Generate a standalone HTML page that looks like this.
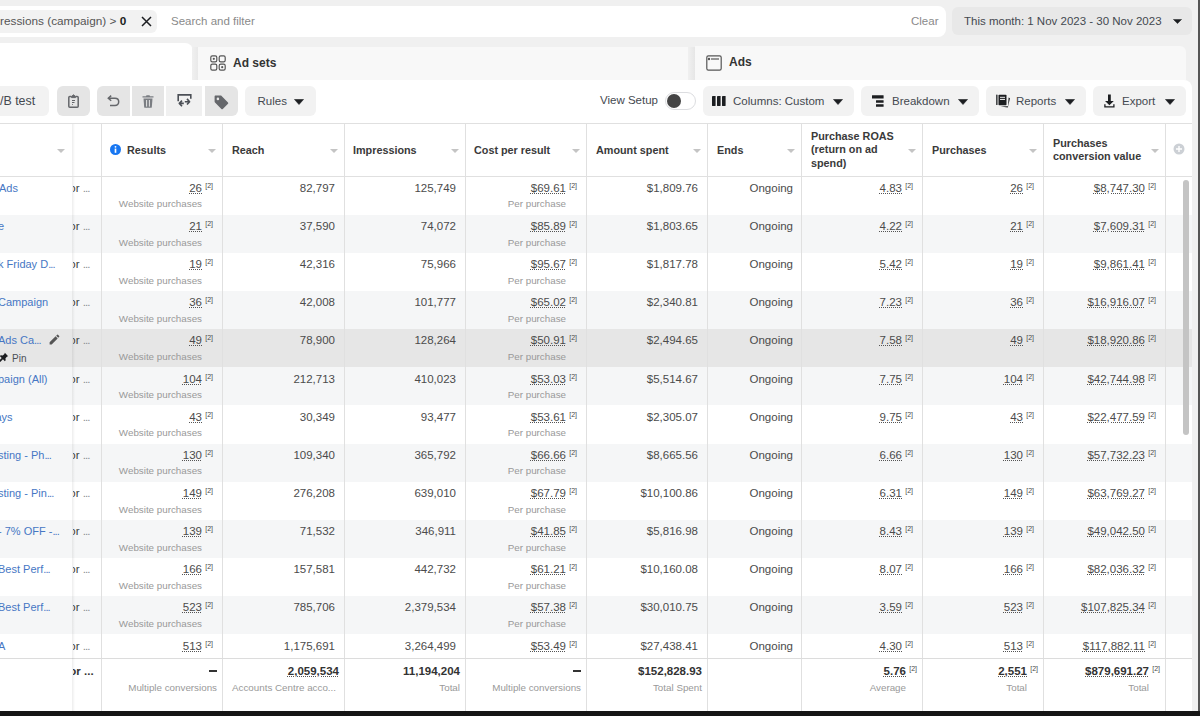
<!DOCTYPE html><html><head><meta charset="utf-8"><style>
*{margin:0;padding:0;box-sizing:border-box}
html,body{width:1200px;height:716px;overflow:hidden}
body{background:#f0f0f0;font-family:"Liberation Sans",sans-serif;position:relative;color:#1c1e21}
.abs{position:absolute}
#search{position:absolute;left:0;top:6px;width:946px;height:31px;background:#fff;border-radius:0 8px 8px 0}
#chip{position:absolute;left:0;top:10px;width:157px;height:23px;background:#f2f2f2;border-radius:0 6px 6px 0;font-size:11.8px;color:#555;white-space:nowrap}
#chip .t{position:absolute;left:0;top:4px;line-height:14px}
#chip .x{position:absolute;left:141px;top:6px}
#ph{position:absolute;left:171px;top:14px;font-size:11.5px;color:#8a8a8a;line-height:14px}
#clear{position:absolute;left:911px;top:14px;font-size:11.5px;color:#8a8a8a;line-height:14px}
#date{position:absolute;left:952px;top:7px;width:240px;height:28px;background:#e8e8e8;border-radius:6px;font-size:11.5px;color:#444950}
#date .t{position:absolute;left:12px;top:7px;line-height:14px;white-space:nowrap}
.caret{position:absolute;width:0;height:0;border-left:5px solid transparent;border-right:5px solid transparent;border-top:6px solid #1c1e21}
#tab1{position:absolute;left:0;top:43px;width:193px;height:40px;background:#fff;border-radius:0 8px 0 0}
#tab2{position:absolute;left:198px;top:46.5px;width:490px;height:33.5px;background:#f8f8f8;border-radius:0}
#tab3{position:absolute;left:695px;top:46px;width:491px;height:34px;background:#f8f8f8;border-radius:0 6px 0 0}
.tabt{position:absolute;font-size:12px;font-weight:bold;color:#333;line-height:16px}
#toolbar{position:absolute;left:0;top:80px;width:1192px;height:44px;background:#fff;border-radius:0 8px 0 0}
.btn{position:absolute;top:86px;height:30px;background:#f2f2f2;border-radius:6px;font-size:11.5px;color:#444950}
.btn .t{position:absolute;top:8px;line-height:14px;white-space:nowrap}
.btn svg{position:absolute}
#tbl{position:absolute;left:0;top:123px;width:1192px;height:588px;background:#fff;overflow:hidden}
#tbl > div,#tbl > svg{position:absolute}
.row{left:0;width:1192px;height:38.15px;background:#fff}
.row.alt{background:#f5f6f7}
.row.hov{background:#e6e6e6}
.vl{top:0;width:1px;height:588px;background:#e0e0e0}
.c{font-size:11.5px;line-height:14px;white-space:nowrap;color:#4b4b4b}
.name{left:0;color:#4677c4}
.obj{left:72.5px;color:#3b3d40;width:28px;overflow:hidden;text-indent:-3.2px}
.num{text-align:right}
.num u{text-decoration:underline dotted #555;text-underline-offset:0.5px;text-decoration-thickness:1px}
.c i{font-style:normal;font-weight:normal;font-size:7px;position:absolute;right:0;top:0;line-height:9px;color:#4b4b4b}
.c.s{padding-right:11px}
.sub{font-size:9.8px;line-height:12px;color:#999}
.fb{font-weight:bold;color:#333}
.pin{color:#4b4f56;font-size:10px}
.hd{font-size:10.8px;font-weight:bold;color:#3a3a3a;line-height:13.3px}
.sa{width:0;height:0;border-left:4px solid transparent;border-right:4px solid transparent;border-top:4px solid #c4c4c4}
.foot{left:0;width:1192px;height:60px;background:#fff;border-top:1px solid #dcdcdc}
.sticky{left:72px;top:0;width:3px;height:588px;background:linear-gradient(to right,rgba(0,0,0,0.07),rgba(0,0,0,0))}
.name{font-size:11px}
.el{letter-spacing:-0.9px}
.obj .el{color:#8a8d91}
.dash{display:inline-block;width:8px;height:1.6px;background:#333;vertical-align:3.5px}

</style></head><body>
<div id="search"></div>
<div id="chip"><span class="t">ressions (campaign) &gt; <b style="color:#1c1e21">0</b></span>
<svg class="x" width="11" height="11" viewBox="0 0 11 11"><path d="M1 1L10 10M10 1L1 10" stroke="#1c1e21" stroke-width="1.5"/></svg></div>
<div id="ph">Search and filter</div>
<div id="clear">Clear</div>
<div id="date"><span class="t">This month: 1 Nov 2023 - 30 Nov 2023</span><svg class="abs" style="left:221px;top:12px" width="9" height="5" viewBox="0 0 10 6" preserveAspectRatio="none"><path d="M0.5 0.5H9.5L5 5.5Z" fill="#1c1e21" stroke="#1c1e21" stroke-width="0.6" stroke-linejoin="round"/></svg></div>
<div id="tab2"><svg class="abs" style="left:12px;top:8px" width="16" height="16" viewBox="0 0 16 16" fill="none" stroke="#555" stroke-width="1.2"><rect x="0.8" y="0.8" width="6" height="6" rx="1.6"/><rect x="9.2" y="0.8" width="6" height="6" rx="1.6"/><rect x="0.8" y="9.2" width="6" height="6" rx="1.6"/><rect x="9.2" y="9.2" width="6" height="6" rx="1.6"/><circle cx="3.8" cy="3.8" r="1.1" fill="#555" stroke="none"/><circle cx="12.2" cy="12.2" r="1.1" fill="#555" stroke="none"/></svg><span class="tabt" style="left:35px;top:8px">Ad sets</span></div>
<div id="tab3"><svg class="abs" style="left:11px;top:9px" width="16" height="16" viewBox="0 0 16 16" fill="none" stroke="#555" stroke-width="1.2"><rect x="0.8" y="0.8" width="14.4" height="14.4" rx="1.6"/><path d="M5 4H13" /><circle cx="3" cy="4" r="0.6" fill="#555"/></svg><span class="tabt" style="left:34px;top:8px">Ads</span></div>
<div id="tab1"></div>
<div class="abs" style="left:192px;top:46.5px;width:6px;height:33.5px;background:linear-gradient(to right,#f0f0f0,#e9e9e9)"></div>
<div class="abs" style="left:688px;top:46.5px;width:7px;height:33.5px;background:linear-gradient(to right,#f0f0f0,#e6e6e6)"></div>
<div id="toolbar"></div>
<div class="btn" style="left:0;width:49px;border-radius:0 6px 6px 0"><span class="t" style="left:0;font-size:12.4px;top:7.5px">/B test</span></div>
<div class="btn" style="left:56.5px;width:33px;background:#e5e5e5"><svg style="left:11px;top:8px" width="11" height="14" viewBox="0 0 11 14" fill="none" stroke="#65676b" stroke-width="1.5"><path d="M3.5 2.5H1.8C1.2 2.5 0.8 2.9 0.8 3.5V12.2C0.8 12.8 1.2 13.2 1.8 13.2H9.2C9.8 13.2 10.2 12.8 10.2 12.2V3.5C10.2 2.9 9.8 2.5 9.2 2.5H7.5"/><path d="M3.5 3.6H7.5L7.5 2.5L5.5 0.8L3.5 2.5Z" fill="#65676b" stroke-width="1"/><path d="M4 6.5H7M4 8.5H6.5M4 10.5H4.8" stroke-width="1"/></svg></div>
<div class="btn" style="left:96.5px;width:33px;background:#e5e5e5;border-radius:6px 0 0 6px"><svg style="left:10px;top:9px" width="13" height="12" viewBox="0 0 13 12" fill="none" stroke="#65676b" stroke-width="1.5"><path d="M1.5 3.2H8C10.2 3.2 11.7 4.8 11.7 6.8C11.7 8.8 10.2 10.6 8 10.6H3"/><path d="M4.2 0.6L1.3 3.2L4.2 5.8"/></svg></div>
<div class="btn" style="left:131.5px;width:32.5px;background:#e5e5e5;border-radius:0"><svg style="left:10px;top:8px" width="12" height="14" viewBox="0 0 12 14"><path d="M4.5 1.2H7.5L8 2.2H11.5V3.6H0.5V2.2H4Z" fill="#7a7d82"/><path d="M1.5 4.6H10.5L9.8 13.2C9.7 13.6 9.4 13.8 9 13.8H3C2.6 13.8 2.3 13.6 2.2 13.2Z" fill="#7a7d82"/><path d="M4.6 6V12.6M7.4 6V12.6" stroke="#e5e5e5" stroke-width="1"/></svg></div>
<div class="btn" style="left:166px;width:36px;background:#f0f0f0;border-radius:0"><svg style="left:11px;top:8px" width="15" height="15" viewBox="0 0 15 15" fill="none" stroke="#4b4f56" stroke-width="1.6"><path d="M1.2 7.2V0.9H13.8V4.7"/><path d="M5 6.6L2.3 9.4L5 12.2M2.5 9.4H6.8M10 4.9L12.6 7.7L10 10.5M7.8 7.7H12.4" stroke-linejoin="round"/></svg></div>
<div class="btn" style="left:204.5px;width:33px;background:#e5e5e5;border-radius:0 6px 6px 0"><svg style="left:9px;top:8.5px" width="15" height="15" viewBox="0 0 15 15"><path d="M0.6 1.6C0.6 1 1 0.6 1.6 0.6H6.6C7 0.6 7.3 0.7 7.6 1L14 7.4C14.4 7.8 14.4 8.4 14 8.8L8.8 14C8.4 14.4 7.8 14.4 7.4 14L1 7.6C0.7 7.3 0.6 7 0.6 6.6Z" fill="#65676b"/><circle cx="3.9" cy="3.9" r="1.3" fill="#e5e5e5"/></svg></div>
<div class="btn" style="left:244.5px;width:71px"><span class="t" style="left:13px">Rules</span><svg style="left:49px;top:12.5px" width="10" height="6" viewBox="0 0 10 6"><path d="M0.5 0.5H9.5L5 5.5Z" fill="#1c1e21" stroke="#1c1e21" stroke-width="0.6" stroke-linejoin="round"/></svg></div>
<div class="abs" style="left:600px;top:93px;font-size:11.5px;color:#444950;line-height:14px">View Setup</div>
<div class="abs" style="left:664.5px;top:92px;width:31px;height:18px;border-radius:9px;border:1px solid #dcdde0;background:#fff"></div>
<div class="abs" style="left:667px;top:94px;width:14px;height:14px;border-radius:7px;background:#444"></div>
<div class="btn" style="left:703px;width:151px"><svg style="left:9.3px;top:10px" width="14" height="10" viewBox="0 0 14 10" fill="#1c1e21"><rect x="0" y="0" width="3.6" height="10" rx="0.4"/><rect x="5" y="0" width="3.6" height="10" rx="0.4"/><rect x="10" y="0" width="3.6" height="10" rx="0.4"/></svg><span class="t" style="left:30px">Columns: Custom</span><svg style="left:130px;top:12.5px" width="10" height="6" viewBox="0 0 10 6"><path d="M0.5 0.5H9.5L5 5.5Z" fill="#1c1e21" stroke="#1c1e21" stroke-width="0.6" stroke-linejoin="round"/></svg></div>
<div class="btn" style="left:861px;width:118px"><svg style="left:11px;top:9px" width="12" height="12" viewBox="0 0 12 12" fill="#1c1e21"><rect x="0" y="0.3" width="11.6" height="3.2" rx="0.3"/><rect x="4" y="5.2" width="7.6" height="2.5" rx="0.3"/><rect x="4" y="9.2" width="7.6" height="2.5" rx="0.3"/></svg><span class="t" style="left:31px">Breakdown</span><svg style="left:97px;top:12.5px" width="10" height="6" viewBox="0 0 10 6"><path d="M0.5 0.5H9.5L5 5.5Z" fill="#1c1e21" stroke="#1c1e21" stroke-width="0.6" stroke-linejoin="round"/></svg></div>
<div class="btn" style="left:986px;width:100px"><svg style="left:9.5px;top:8px" width="15" height="14" viewBox="0 0 15 14"><path d="M12.6 3.6L14 4.2L11.8 13.6L4.5 12.4L12 12.2Z" fill="#1c1e21"/><rect x="0.2" y="0.5" width="1.3" height="10.5" rx="0.6" fill="#1c1e21"/><rect x="2.5" y="0.7" width="8" height="10.5" rx="0.8" fill="#1c1e21"/><rect x="4" y="2.8" width="5" height="1" fill="#f2f2f2"/><rect x="4" y="4.9" width="5" height="1" fill="#f2f2f2"/></svg><span class="t" style="left:30px">Reports</span><svg style="left:79px;top:12.5px" width="10" height="6" viewBox="0 0 10 6"><path d="M0.5 0.5H9.5L5 5.5Z" fill="#1c1e21" stroke="#1c1e21" stroke-width="0.6" stroke-linejoin="round"/></svg></div>
<div class="btn" style="left:1093px;width:92.5px"><svg style="left:11px;top:8px" width="11" height="14" viewBox="0 0 11 14"><path d="M4 0.6H6.8V7H9.8L5.4 11.2L1 7H4Z" fill="#1c1e21"/><path d="M0.9 10.2V12.8H9.9V10.2" fill="none" stroke="#1c1e21" stroke-width="1.3"/></svg><span class="t" style="left:29px">Export</span><svg style="left:72px;top:12.5px" width="10" height="6" viewBox="0 0 10 6"><path d="M0.5 0.5H9.5L5 5.5Z" fill="#1c1e21" stroke="#1c1e21" stroke-width="0.6" stroke-linejoin="round"/></svg></div>

<div id="tbl">
<div class="row" style="top:53.5px"></div>
<div class="row alt" style="top:91.7px"></div>
<div class="row" style="top:129.8px"></div>
<div class="row alt" style="top:167.9px"></div>
<div class="row hov" style="top:206.1px"></div>
<div class="row alt" style="top:244.2px"></div>
<div class="row" style="top:282.4px"></div>
<div class="row alt" style="top:320.6px"></div>
<div class="row" style="top:358.7px"></div>
<div class="row alt" style="top:396.8px"></div>
<div class="row" style="top:435.0px"></div>
<div class="row alt" style="top:473.1px"></div>
<div class="row" style="top:511.3px"></div>
<div class="vl" style="left:101px"></div>
<div class="vl" style="left:222px"></div>
<div class="vl" style="left:344px"></div>
<div class="vl" style="left:465px"></div>
<div class="vl" style="left:586px"></div>
<div class="vl" style="left:707px"></div>
<div class="vl" style="left:801px"></div>
<div class="vl" style="left:922px"></div>
<div class="vl" style="left:1043px"></div>
<div class="vl" style="left:1165px"></div>
<div class="sticky"></div>
<div style="left:0;top:0;width:1192px;height:1px;background:#e0e0e0"></div>
<div style="left:0;top:52.5px;width:1192px;height:1px;background:#e0e0e0"></div>
<div class="sa" style="left:57px;top:26px"></div>
<svg style="left:110px;top:21px" width="11" height="11" viewBox="0 0 12 12"><circle cx="6" cy="6" r="6" fill="#1877f2"/><rect x="5.1" y="5" width="1.8" height="4.6" fill="#fff"/><circle cx="6" cy="3.1" r="1" fill="#fff"/></svg>
<div class="hd" style="left:127px;top:20.5px">Results</div><div class="sa" style="left:208px;top:26px"></div>
<div class="hd" style="left:232px;top:20.5px">Reach</div><div class="sa" style="left:330px;top:26px"></div>
<div class="hd" style="left:353px;top:20.5px">Impressions</div><div class="sa" style="left:451px;top:26px"></div>
<div class="hd" style="left:474px;top:20.5px">Cost per result</div><div class="sa" style="left:572px;top:26px"></div>
<div class="hd" style="left:596px;top:20.5px">Amount spent</div><div class="sa" style="left:693px;top:26px"></div>
<div class="hd" style="left:717px;top:20.5px">Ends</div><div class="sa" style="left:787px;top:26px"></div>
<div class="hd" style="left:811px;top:7.1px">Purchase ROAS<br>(return on ad<br>spend)</div><div class="sa" style="left:908px;top:26px"></div>
<div class="hd" style="left:932px;top:20.5px">Purchases</div><div class="sa" style="left:1029px;top:26px"></div>
<div class="hd" style="left:1053px;top:13.8px">Purchases<br>conversion value</div><div class="sa" style="left:1151px;top:26px"></div>
<svg style="left:1173px;top:20px" width="12" height="12" viewBox="0 0 12 12"><circle cx="6" cy="6" r="5.5" fill="#ccd0d5"/><path d="M6 3V9M3 6H9" stroke="#fff" stroke-width="1.4"/></svg>
<div style="left:1183px;top:57px;width:6px;height:255px;border-radius:3px;background:#c4c4c4"></div>

<div class="c name" style="top:57.8px;left:-1px">Ads</div>
<div class="c obj" style="top:57.8px">or <span class="el">...</span></div>
<div class="c num s" style="top:57.8px;right:979px"><u>26</u><i>[2]</i></div>
<div class="c sub" style="top:75.4px;right:990px">Website purchases</div>
<div class="c num" style="top:57.8px;right:857px">82,797</div>
<div class="c num" style="top:57.8px;right:736px">125,749</div>
<div class="c num s" style="top:57.8px;right:615px"><u>$69.61</u><i>[2]</i></div>
<div class="c sub" style="top:75.4px;right:626px">Per purchase</div>
<div class="c num" style="top:57.8px;right:494px">$1,809.76</div>
<div class="c num" style="top:57.8px;right:399px">Ongoing</div>
<div class="c num s" style="top:57.8px;right:279px"><u>4.83</u><i>[2]</i></div>
<div class="c num s" style="top:57.8px;right:158px"><u>26</u><i>[2]</i></div>
<div class="c num s" style="top:57.8px;right:36px"><u>$8,747.30</u><i>[2]</i></div>
<div class="c name" style="top:96.0px;left:-2px">e</div>
<div class="c obj" style="top:96.0px">or <span class="el">...</span></div>
<div class="c num s" style="top:96.0px;right:979px"><u>21</u><i>[2]</i></div>
<div class="c sub" style="top:113.6px;right:990px">Website purchases</div>
<div class="c num" style="top:96.0px;right:857px">37,590</div>
<div class="c num" style="top:96.0px;right:736px">74,072</div>
<div class="c num s" style="top:96.0px;right:615px"><u>$85.89</u><i>[2]</i></div>
<div class="c sub" style="top:113.6px;right:626px">Per purchase</div>
<div class="c num" style="top:96.0px;right:494px">$1,803.65</div>
<div class="c num" style="top:96.0px;right:399px">Ongoing</div>
<div class="c num s" style="top:96.0px;right:279px"><u>4.22</u><i>[2]</i></div>
<div class="c num s" style="top:96.0px;right:158px"><u>21</u><i>[2]</i></div>
<div class="c num s" style="top:96.0px;right:36px"><u>$7,609.31</u><i>[2]</i></div>
<div class="c name" style="top:134.1px;left:-2px">k Friday D<span class="el">...</span></div>
<div class="c obj" style="top:134.1px">or <span class="el">...</span></div>
<div class="c num s" style="top:134.1px;right:979px"><u>19</u><i>[2]</i></div>
<div class="c sub" style="top:151.7px;right:990px">Website purchases</div>
<div class="c num" style="top:134.1px;right:857px">42,316</div>
<div class="c num" style="top:134.1px;right:736px">75,966</div>
<div class="c num s" style="top:134.1px;right:615px"><u>$95.67</u><i>[2]</i></div>
<div class="c sub" style="top:151.7px;right:626px">Per purchase</div>
<div class="c num" style="top:134.1px;right:494px">$1,817.78</div>
<div class="c num" style="top:134.1px;right:399px">Ongoing</div>
<div class="c num s" style="top:134.1px;right:279px"><u>5.42</u><i>[2]</i></div>
<div class="c num s" style="top:134.1px;right:158px"><u>19</u><i>[2]</i></div>
<div class="c num s" style="top:134.1px;right:36px"><u>$9,861.41</u><i>[2]</i></div>
<div class="c name" style="top:172.2px;left:-2px">Campaign</div>
<div class="c obj" style="top:172.2px">or <span class="el">...</span></div>
<div class="c num s" style="top:172.2px;right:979px"><u>36</u><i>[2]</i></div>
<div class="c sub" style="top:189.8px;right:990px">Website purchases</div>
<div class="c num" style="top:172.2px;right:857px">42,008</div>
<div class="c num" style="top:172.2px;right:736px">101,777</div>
<div class="c num s" style="top:172.2px;right:615px"><u>$65.02</u><i>[2]</i></div>
<div class="c sub" style="top:189.8px;right:626px">Per purchase</div>
<div class="c num" style="top:172.2px;right:494px">$2,340.81</div>
<div class="c num" style="top:172.2px;right:399px">Ongoing</div>
<div class="c num s" style="top:172.2px;right:279px"><u>7.23</u><i>[2]</i></div>
<div class="c num s" style="top:172.2px;right:158px"><u>36</u><i>[2]</i></div>
<div class="c num s" style="top:172.2px;right:36px"><u>$16,916.07</u><i>[2]</i></div>
<div class="c name" style="top:210.4px;left:-2px">Ads Ca<span class="el">...</span></div>
<svg style="left:47.5px;top:209.6px" width="13" height="13" viewBox="0 0 24 24"><path d="M3 17.25V21h3.75L17.81 9.94l-3.75-3.75L3 17.25zM20.71 7.04a1 1 0 0 0 0-1.41l-2.34-2.34a1 1 0 0 0-1.41 0l-1.83 1.83 3.75 3.75 1.83-1.83z" fill="#555"/></svg>
<svg style="left:-1px;top:228.6px" width="10" height="10" viewBox="0 0 24 24"><path d="M14 2l8 8-2.5 1-4 4 .5 5-2 2-4.5-4.5L3 24 0 21l6.5-6.5L2 10l2-2 5 .5 4-4z" fill="#1c1e21"/></svg>
<div class="c pin" style="left:12px;top:228.6px">Pin</div>

<div class="c obj" style="top:210.4px">or <span class="el">...</span></div>
<div class="c num s" style="top:210.4px;right:979px"><u>49</u><i>[2]</i></div>
<div class="c sub" style="top:228.0px;right:990px">Website purchases</div>
<div class="c num" style="top:210.4px;right:857px">78,900</div>
<div class="c num" style="top:210.4px;right:736px">128,264</div>
<div class="c num s" style="top:210.4px;right:615px"><u>$50.91</u><i>[2]</i></div>
<div class="c sub" style="top:228.0px;right:626px">Per purchase</div>
<div class="c num" style="top:210.4px;right:494px">$2,494.65</div>
<div class="c num" style="top:210.4px;right:399px">Ongoing</div>
<div class="c num s" style="top:210.4px;right:279px"><u>7.58</u><i>[2]</i></div>
<div class="c num s" style="top:210.4px;right:158px"><u>49</u><i>[2]</i></div>
<div class="c num s" style="top:210.4px;right:36px"><u>$18,920.86</u><i>[2]</i></div>
<div class="c name" style="top:248.6px;left:-2px">paign (All)</div>
<div class="c obj" style="top:248.6px">or <span class="el">...</span></div>
<div class="c num s" style="top:248.6px;right:979px"><u>104</u><i>[2]</i></div>
<div class="c sub" style="top:266.1px;right:990px">Website purchases</div>
<div class="c num" style="top:248.6px;right:857px">212,713</div>
<div class="c num" style="top:248.6px;right:736px">410,023</div>
<div class="c num s" style="top:248.6px;right:615px"><u>$53.03</u><i>[2]</i></div>
<div class="c sub" style="top:266.1px;right:626px">Per purchase</div>
<div class="c num" style="top:248.6px;right:494px">$5,514.67</div>
<div class="c num" style="top:248.6px;right:399px">Ongoing</div>
<div class="c num s" style="top:248.6px;right:279px"><u>7.75</u><i>[2]</i></div>
<div class="c num s" style="top:248.6px;right:158px"><u>104</u><i>[2]</i></div>
<div class="c num s" style="top:248.6px;right:36px"><u>$42,744.98</u><i>[2]</i></div>
<div class="c name" style="top:286.7px;left:-4.5px">ays</div>
<div class="c obj" style="top:286.7px">or <span class="el">...</span></div>
<div class="c num s" style="top:286.7px;right:979px"><u>43</u><i>[2]</i></div>
<div class="c sub" style="top:304.3px;right:990px">Website purchases</div>
<div class="c num" style="top:286.7px;right:857px">30,349</div>
<div class="c num" style="top:286.7px;right:736px">93,477</div>
<div class="c num s" style="top:286.7px;right:615px"><u>$53.61</u><i>[2]</i></div>
<div class="c sub" style="top:304.3px;right:626px">Per purchase</div>
<div class="c num" style="top:286.7px;right:494px">$2,305.07</div>
<div class="c num" style="top:286.7px;right:399px">Ongoing</div>
<div class="c num s" style="top:286.7px;right:279px"><u>9.75</u><i>[2]</i></div>
<div class="c num s" style="top:286.7px;right:158px"><u>43</u><i>[2]</i></div>
<div class="c num s" style="top:286.7px;right:36px"><u>$22,477.59</u><i>[2]</i></div>
<div class="c name" style="top:324.9px;left:-2px">sting - Ph<span class="el">...</span></div>
<div class="c obj" style="top:324.9px">or <span class="el">...</span></div>
<div class="c num s" style="top:324.9px;right:979px"><u>130</u><i>[2]</i></div>
<div class="c sub" style="top:342.4px;right:990px">Website purchases</div>
<div class="c num" style="top:324.9px;right:857px">109,340</div>
<div class="c num" style="top:324.9px;right:736px">365,792</div>
<div class="c num s" style="top:324.9px;right:615px"><u>$66.66</u><i>[2]</i></div>
<div class="c sub" style="top:342.4px;right:626px">Per purchase</div>
<div class="c num" style="top:324.9px;right:494px">$8,665.56</div>
<div class="c num" style="top:324.9px;right:399px">Ongoing</div>
<div class="c num s" style="top:324.9px;right:279px"><u>6.66</u><i>[2]</i></div>
<div class="c num s" style="top:324.9px;right:158px"><u>130</u><i>[2]</i></div>
<div class="c num s" style="top:324.9px;right:36px"><u>$57,732.23</u><i>[2]</i></div>
<div class="c name" style="top:363.0px;left:-2px">sting - Pin<span class="el">...</span></div>
<div class="c obj" style="top:363.0px">or <span class="el">...</span></div>
<div class="c num s" style="top:363.0px;right:979px"><u>149</u><i>[2]</i></div>
<div class="c sub" style="top:380.6px;right:990px">Website purchases</div>
<div class="c num" style="top:363.0px;right:857px">276,208</div>
<div class="c num" style="top:363.0px;right:736px">639,010</div>
<div class="c num s" style="top:363.0px;right:615px"><u>$67.79</u><i>[2]</i></div>
<div class="c sub" style="top:380.6px;right:626px">Per purchase</div>
<div class="c num" style="top:363.0px;right:494px">$10,100.86</div>
<div class="c num" style="top:363.0px;right:399px">Ongoing</div>
<div class="c num s" style="top:363.0px;right:279px"><u>6.31</u><i>[2]</i></div>
<div class="c num s" style="top:363.0px;right:158px"><u>149</u><i>[2]</i></div>
<div class="c num s" style="top:363.0px;right:36px"><u>$63,769.27</u><i>[2]</i></div>
<div class="c name" style="top:401.1px;left:-2px">- 7% OFF -<span class="el">...</span></div>
<div class="c obj" style="top:401.1px">or <span class="el">...</span></div>
<div class="c num s" style="top:401.1px;right:979px"><u>139</u><i>[2]</i></div>
<div class="c sub" style="top:418.7px;right:990px">Website purchases</div>
<div class="c num" style="top:401.1px;right:857px">71,532</div>
<div class="c num" style="top:401.1px;right:736px">346,911</div>
<div class="c num s" style="top:401.1px;right:615px"><u>$41.85</u><i>[2]</i></div>
<div class="c sub" style="top:418.7px;right:626px">Per purchase</div>
<div class="c num" style="top:401.1px;right:494px">$5,816.98</div>
<div class="c num" style="top:401.1px;right:399px">Ongoing</div>
<div class="c num s" style="top:401.1px;right:279px"><u>8.43</u><i>[2]</i></div>
<div class="c num s" style="top:401.1px;right:158px"><u>139</u><i>[2]</i></div>
<div class="c num s" style="top:401.1px;right:36px"><u>$49,042.50</u><i>[2]</i></div>
<div class="c name" style="top:439.3px;left:-2px">Best Perf<span class="el">...</span></div>
<div class="c obj" style="top:439.3px">or <span class="el">...</span></div>
<div class="c num s" style="top:439.3px;right:979px"><u>166</u><i>[2]</i></div>
<div class="c sub" style="top:456.9px;right:990px">Website purchases</div>
<div class="c num" style="top:439.3px;right:857px">157,581</div>
<div class="c num" style="top:439.3px;right:736px">442,732</div>
<div class="c num s" style="top:439.3px;right:615px"><u>$61.21</u><i>[2]</i></div>
<div class="c sub" style="top:456.9px;right:626px">Per purchase</div>
<div class="c num" style="top:439.3px;right:494px">$10,160.08</div>
<div class="c num" style="top:439.3px;right:399px">Ongoing</div>
<div class="c num s" style="top:439.3px;right:279px"><u>8.07</u><i>[2]</i></div>
<div class="c num s" style="top:439.3px;right:158px"><u>166</u><i>[2]</i></div>
<div class="c num s" style="top:439.3px;right:36px"><u>$82,036.32</u><i>[2]</i></div>
<div class="c name" style="top:477.4px;left:-2px">Best Perf<span class="el">...</span></div>
<div class="c obj" style="top:477.4px">or <span class="el">...</span></div>
<div class="c num s" style="top:477.4px;right:979px"><u>523</u><i>[2]</i></div>
<div class="c sub" style="top:495.0px;right:990px">Website purchases</div>
<div class="c num" style="top:477.4px;right:857px">785,706</div>
<div class="c num" style="top:477.4px;right:736px">2,379,534</div>
<div class="c num s" style="top:477.4px;right:615px"><u>$57.38</u><i>[2]</i></div>
<div class="c sub" style="top:495.0px;right:626px">Per purchase</div>
<div class="c num" style="top:477.4px;right:494px">$30,010.75</div>
<div class="c num" style="top:477.4px;right:399px">Ongoing</div>
<div class="c num s" style="top:477.4px;right:279px"><u>3.59</u><i>[2]</i></div>
<div class="c num s" style="top:477.4px;right:158px"><u>523</u><i>[2]</i></div>
<div class="c num s" style="top:477.4px;right:36px"><u>$107,825.34</u><i>[2]</i></div>
<div class="c name" style="top:515.6px;left:-2px">A</div>
<div class="c obj" style="top:515.6px">or <span class="el">...</span></div>
<div class="c num s" style="top:515.6px;right:979px"><u>513</u><i>[2]</i></div>
<div class="c sub" style="top:533.2px;right:990px">Website purchases</div>
<div class="c num" style="top:515.6px;right:857px">1,175,691</div>
<div class="c num" style="top:515.6px;right:736px">3,264,499</div>
<div class="c num s" style="top:515.6px;right:615px"><u>$53.49</u><i>[2]</i></div>
<div class="c sub" style="top:533.2px;right:626px">Per purchase</div>
<div class="c num" style="top:515.6px;right:494px">$27,438.41</div>
<div class="c num" style="top:515.6px;right:399px">Ongoing</div>
<div class="c num s" style="top:515.6px;right:279px"><u>4.30</u><i>[2]</i></div>
<div class="c num s" style="top:515.6px;right:158px"><u>513</u><i>[2]</i></div>
<div class="c num s" style="top:515.6px;right:36px"><u>$117,882.11</u><i>[2]</i></div>
<div class="foot" style="top:534.5px"></div>
<div class="vl" style="left:101px;top:535.5px;height:60px"></div>
<div class="vl" style="left:222px;top:535.5px;height:60px"></div>
<div class="vl" style="left:344px;top:535.5px;height:60px"></div>
<div class="vl" style="left:465px;top:535.5px;height:60px"></div>
<div class="vl" style="left:586px;top:535.5px;height:60px"></div>
<div class="vl" style="left:707px;top:535.5px;height:60px"></div>
<div class="vl" style="left:801px;top:535.5px;height:60px"></div>
<div class="vl" style="left:922px;top:535.5px;height:60px"></div>
<div class="vl" style="left:1043px;top:535.5px;height:60px"></div>
<div class="vl" style="left:1165px;top:535.5px;height:60px"></div>
<div class="sticky" style="top:534.5px;height:60px"></div>
<div class="c num fb" style="top:541.0px;right:975px"><span class="dash"></span></div>
<div class="c sub" style="top:558.5px;right:975px">Multiple conversions</div>
<div class="c num fb" style="top:541.0px;right:853px"><u>2,059,534</u></div>
<div class="c sub" style="top:558.5px;left:232px">Accounts Centre acco...</div>
<div class="c num fb" style="top:541.0px;right:732px">11,194,204</div>
<div class="c sub" style="top:558.5px;right:732px">Total</div>
<div class="c num fb" style="top:541.0px;right:611px"><span class="dash"></span></div>
<div class="c sub" style="top:558.5px;right:611px">Multiple conversions</div>
<div class="c num fb" style="top:541.0px;right:490px">$152,828.93</div>
<div class="c sub" style="top:558.5px;right:490px">Total Spent</div>
<div class="c num fb s" style="top:541.0px;right:275px"><u>5.76</u><i>[2]</i></div>
<div class="c sub" style="top:558.5px;right:286px">Average</div>
<div class="c num fb s" style="top:541.0px;right:154px"><u>2,551</u><i>[2]</i></div>
<div class="c sub" style="top:558.5px;right:165px">Total</div>
<div class="c num fb s" style="top:541.0px;right:32px"><u>$879,691.27</u><i>[2]</i></div>
<div class="c sub" style="top:558.5px;right:43px">Total</div>
<div class="c obj fb" style="top:541.0px">or ...</div>
</div>
<div class="abs" style="left:1192px;top:0;width:8px;height:716px;background:#f0f0f0"></div>
<div class="abs" style="left:1198px;top:0;width:2px;height:716px;background:#555"></div>
<div class="abs" style="left:0;top:711px;width:1200px;height:5px;background:#151515"></div>

</body></html>
